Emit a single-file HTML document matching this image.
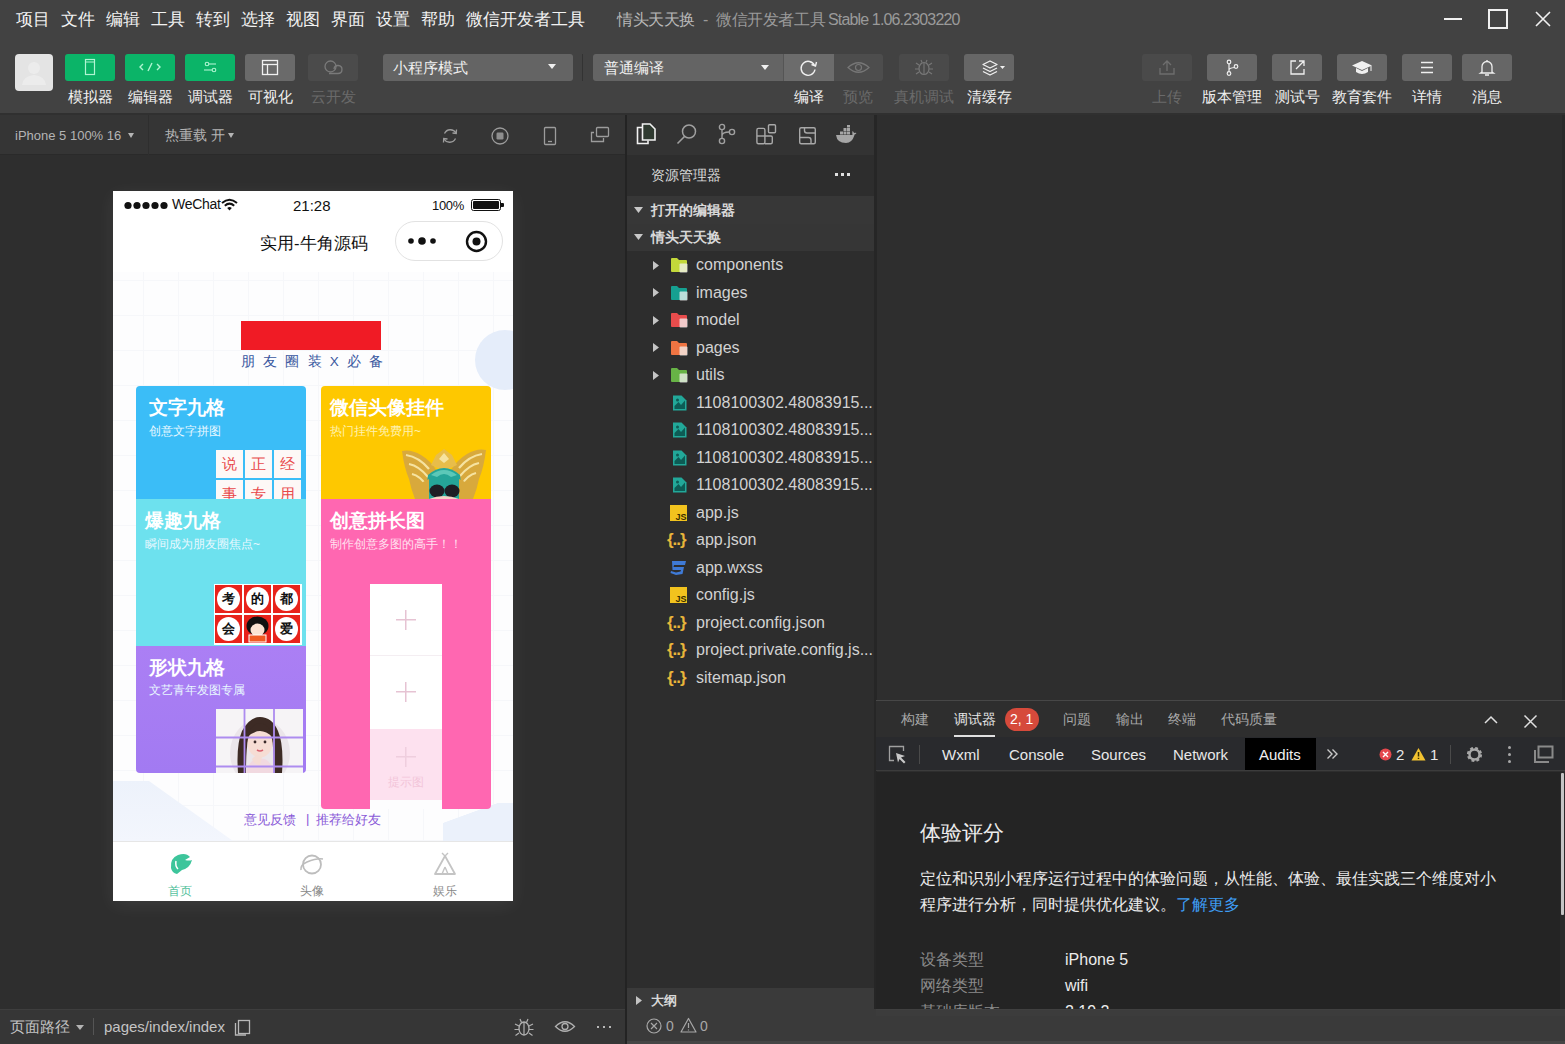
<!DOCTYPE html>
<html><head><meta charset="utf-8">
<style>
*{box-sizing:border-box;margin:0;padding:0}
html,body{width:1565px;height:1044px;overflow:hidden;background:#2e2e2e;font-family:"Liberation Sans",sans-serif;position:relative}
.a{position:absolute}
.t{position:absolute;white-space:nowrap;line-height:1}
/* top */
#top{left:0;top:0;width:1565px;height:114px;background:#424242}
.menu{top:11px;font-size:16.5px;color:#f2f2f2}
.tbtn{position:absolute;top:54px;width:50px;height:27px;border-radius:3px;background:#616161}
.tbtn.g{background:#0bb468}
.tbtn.d{background:#4a4a4a}
.tlab{position:absolute;top:89px;font-size:15px;color:#f0f0f0;white-space:nowrap;line-height:1;text-align:center;width:80px}
.fn{left:696px;font-size:16px;color:#d2d2d2}
.card-t{font-size:18.5px;color:#fff;font-weight:700}
.card-s{font-size:12px;color:#e8f8ff}
.cellw{width:27px;height:28px;background:#fdf8f6;color:#e8484a;font-size:15px;text-align:center;line-height:28px}
.cellr{width:29px;height:30px;background:#e8231b;border:1px solid #fff}
.cellr{font-size:13px;font-weight:900;color:#111;text-align:center;line-height:28px}
.cellr::before{content:"";position:absolute;left:2px;top:2px;width:23px;height:24px;border-radius:50%;background:#fff;z-index:0}
.plus{width:20px;height:20px;background:linear-gradient(#e6c3d3,#e6c3d3) center/20px 1.5px no-repeat,linear-gradient(#e6c3d3,#e6c3d3) center/1.5px 20px no-repeat}
.tlab.dim{color:#6a6a6a}
</style></head>
<body>
<div id="top" class="a">
  <div class="t menu" style="left:16px">项目</div>
  <div class="t menu" style="left:61px">文件</div>
  <div class="t menu" style="left:106px">编辑</div>
  <div class="t menu" style="left:151px">工具</div>
  <div class="t menu" style="left:196px">转到</div>
  <div class="t menu" style="left:241px">选择</div>
  <div class="t menu" style="left:286px">视图</div>
  <div class="t menu" style="left:331px">界面</div>
  <div class="t menu" style="left:376px">设置</div>
  <div class="t menu" style="left:421px">帮助</div>
  <div class="t menu" style="left:466px">微信开发者工具</div>
  <div class="t" style="left:617px;top:12px;font-size:16px;color:#9a9a9a;letter-spacing:-0.4px"><span style="color:#b8b8b8">情头天天换</span> <span style="margin:0 4px">-</span> 微信开发者工具</div><div class="t" style="left:828px;top:12px;font-size:16px;letter-spacing:-0.85px;color:#9a9a9a">Stable 1.06.2303220</div>

  <!-- avatar -->
  <div class="a" style="left:15px;top:54px;width:38px;height:37px;background:#e4e4e4;border-radius:4px">
    <svg class="a" style="left:0;top:0" width="38" height="37"><circle cx="19" cy="14" r="6" fill="#ececec"/><path d="M7 31 Q8 22 19 21 Q30 22 31 31 Z" fill="#ececec"/></svg>
  </div>
  <div class="tbtn g" style="left:65px"><svg class="a" style="left:0;top:0" width="50" height="27"><rect x="20.5" y="5.5" width="9" height="15" fill="none" stroke="#b0f5d2" stroke-width="1.2"/><line x1="21" y1="8" x2="29" y2="8" stroke="#b0f5d2" stroke-width="1"/></svg></div>
  <div class="tbtn g" style="left:125px"><svg class="a" style="left:0;top:0" width="50" height="27"><path d="M18 10 L15 13 L18 16 M32 10 L35 13 L32 16 M27 9 L23 17" fill="none" stroke="#b0f5d2" stroke-width="1.4"/></svg></div>
  <div class="tbtn g" style="left:185px"><svg class="a" style="left:0;top:0" width="50" height="27"><circle cx="22" cy="10" r="1.8" fill="none" stroke="#b0f5d2" stroke-width="1.1"/><circle cx="29" cy="16" r="1.8" fill="none" stroke="#b0f5d2" stroke-width="1.1"/><line x1="24" y1="10" x2="31" y2="10" stroke="#b0f5d2" stroke-width="1.1"/><line x1="19" y1="16" x2="27" y2="16" stroke="#b0f5d2" stroke-width="1.1"/></svg></div>
  <div class="tbtn" style="left:245px;background:#6a6a6a"><svg class="a" style="left:0;top:0" width="50" height="27"><rect x="17.5" y="6.5" width="15" height="14" fill="none" stroke="#f0f0f0" stroke-width="1.3"/><line x1="17.5" y1="10.5" x2="32.5" y2="10.5" stroke="#f0f0f0" stroke-width="1.3"/><line x1="22.5" y1="10.5" x2="22.5" y2="20.5" stroke="#f0f0f0" stroke-width="1.3"/></svg></div>
  <div class="tbtn" style="left:308px;background:#4b4b4b"><svg class="a" style="left:0;top:0" width="50" height="27"><circle cx="22.5" cy="12.5" r="5.5" fill="none" stroke="#7a7a7a" stroke-width="1.3"/><path d="M26 15 A4 4 0 1 1 30 19.5 L21 19.5" fill="none" stroke="#7a7a7a" stroke-width="1.3"/></svg></div>
  <div class="tlab" style="left:50px">模拟器</div>
  <div class="tlab" style="left:110px">编辑器</div>
  <div class="tlab" style="left:170px">调试器</div>
  <div class="tlab" style="left:230px">可视化</div>
  <div class="tlab dim" style="left:293px">云开发</div>
  <!-- mode dropdown -->
  <div class="a" style="left:383px;top:54px;width:190px;height:27px;background:#646464;border-radius:3px"></div>
  <div class="t" style="left:393px;top:60px;font-size:15px;color:#f0f0f0">小程序模式</div>
  <svg class="a" style="left:548px;top:64px" width="8" height="5"><path d="M0 0 L8 0 L4 5Z" fill="#f0f0f0"/></svg>
  <div class="a" style="left:582px;top:54px;width:1px;height:27px;background:#333"></div>
  <!-- compile dropdown -->
  <div class="a" style="left:593px;top:54px;width:241px;height:27px;background:#646464;border-radius:3px 0 0 3px"></div>
  <div class="a" style="left:783px;top:54px;width:51px;height:27px;background:#6c6c6c;border-left:1px solid #555"></div>
  <div class="t" style="left:604px;top:60px;font-size:15px;color:#f0f0f0">普通编译</div>
  <svg class="a" style="left:761px;top:65px" width="8" height="5"><path d="M0 0 L8 0 L4 5Z" fill="#f0f0f0"/></svg>
  <svg class="a" style="left:783px;top:54px" width="51" height="27"><path d="M31.5 11.5 A7 7 0 1 0 32 15.5" fill="none" stroke="#f0f0f0" stroke-width="1.4"/><path d="M28.5 10.5 L32.5 12 L33.5 8" fill="none" stroke="#f0f0f0" stroke-width="1.4"/></svg>
  <div class="a" style="left:834px;top:54px;width:49px;height:27px;background:#4d4d4d;border-radius:0 3px 3px 0"></div>
  <svg class="a" style="left:834px;top:54px" width="49" height="27"><path d="M14 13.5 Q24.5 4 35 13.5 Q24.5 23 14 13.5Z" fill="none" stroke="#777" stroke-width="1.2"/><circle cx="24.5" cy="13.5" r="3" fill="none" stroke="#777" stroke-width="1.2"/></svg>
  <div class="tbtn d" style="left:899px"><svg class="a" style="left:0;top:0" width="50" height="27"><ellipse cx="25" cy="14.5" rx="5" ry="6" fill="none" stroke="#777" stroke-width="1.2"/><path d="M20 11 L17 9 M30 11 L33 9 M20 15 L16 15 M30 15 L34 15 M20 18 L17 20 M30 18 L33 20 M23 8.5 L22 6 M27 8.5 L28 6 M25 9 L25 20" fill="none" stroke="#777" stroke-width="1.1"/></svg></div>
  <div class="tbtn" style="left:964px;background:#666"><svg class="a" style="left:0;top:0" width="50" height="27"><path d="M19 10.5 L26 7 L33 10.5 L26 14 Z M19 14 L26 17.5 L33 14 M19 17.5 L26 21 L33 17.5" fill="none" stroke="#f0f0f0" stroke-width="1.3" stroke-linejoin="round"/><path d="M36 12 L41 12 L38.5 15Z" fill="#f0f0f0"/></svg></div>
  <div class="tlab" style="left:769px">编译</div>
  <div class="tlab dim" style="left:818px">预览</div>
  <div class="tlab dim" style="left:884px">真机调试</div>
  <div class="tlab" style="left:949px">清缓存</div>
  <!-- right buttons -->
  <div class="tbtn d" style="left:1142px"><svg class="a" style="left:0;top:0" width="50" height="27"><path d="M18 14 L18 20 L32 20 L32 14 M25 17 L25 7 M21 11 L25 7 L29 11" fill="none" stroke="#6e6e6e" stroke-width="1.3"/></svg></div>
  <div class="tbtn" style="left:1207px;background:#666"><svg class="a" style="left:0;top:0" width="50" height="27"><circle cx="22" cy="8" r="1.8" fill="none" stroke="#f0f0f0" stroke-width="1.2"/><circle cx="22" cy="19.5" r="1.8" fill="none" stroke="#f0f0f0" stroke-width="1.2"/><circle cx="29" cy="12.5" r="1.8" fill="none" stroke="#f0f0f0" stroke-width="1.2"/><path d="M22 10 L22 17.5 M22 16 Q22 14 27.5 13.5" fill="none" stroke="#f0f0f0" stroke-width="1.2"/></svg></div>
  <div class="tbtn" style="left:1272px;background:#666"><svg class="a" style="left:0;top:0" width="50" height="27"><path d="M24 7 L19 7 L19 20 L32 20 L32 15 M27 7 L32 7 L32 12 M32 7 L24 15" fill="none" stroke="#f0f0f0" stroke-width="1.3"/></svg></div>
  <div class="tbtn" style="left:1337px;background:#666"><svg class="a" style="left:0;top:0" width="50" height="27"><path d="M15 11.5 L25 7 L35 11.5 L25 16 Z" fill="#f0f0f0"/><path d="M19 14 L19 18 Q25 22 31 18 L31 14 L25 17 Z" fill="#f0f0f0"/><line x1="34" y1="12" x2="34" y2="17" stroke="#f0f0f0" stroke-width="1"/></svg></div>
  <div class="tbtn" style="left:1402px;background:#666"><svg class="a" style="left:0;top:0" width="50" height="27"><path d="M19 8.5 L31 8.5 M19 13.5 L31 13.5 M19 18.5 L31 18.5" stroke="#f0f0f0" stroke-width="1.3"/></svg></div>
  <div class="tbtn" style="left:1462px;background:#666"><svg class="a" style="left:0;top:0" width="50" height="27"><path d="M20 18 L20 12.5 A5 5 0 0 1 30 12.5 L30 18 L31.5 19 L18.5 19 Z M23 21 L27 21" fill="none" stroke="#f0f0f0" stroke-width="1.3"/><line x1="25" y1="6" x2="25" y2="7.5" stroke="#f0f0f0" stroke-width="1.3"/></svg></div>
  <div class="tlab dim" style="left:1127px">上传</div>
  <div class="tlab" style="left:1192px">版本管理</div>
  <div class="tlab" style="left:1257px">测试号</div>
  <div class="tlab" style="left:1322px">教育套件</div>
  <div class="tlab" style="left:1387px">详情</div>
  <div class="tlab" style="left:1447px">消息</div>
  <!-- window controls -->
  <div class="a" style="left:1444px;top:18px;width:18px;height:2px;background:#f0f0f0"></div>
  <div class="a" style="left:1488px;top:9px;width:20px;height:20px;border:2px solid #f0f0f0"></div>
  <svg class="a" style="left:1535px;top:11px" width="16" height="16"><path d="M1 1 L15 15 M15 1 L1 15" stroke="#f0f0f0" stroke-width="1.6"/></svg>
</div>
<!-- sim toolbar -->
<div class="a" style="left:0;top:113px;width:1565px;height:2px;background:#303030"></div>
<div class="a" style="left:0;top:115px;width:625px;height:40px;background:#353535;border-bottom:1px solid #2a2a2a"></div>
<!-- sim status bar -->
<div class="a" style="left:0;top:1009px;width:625px;height:35px;background:#363636;border-top:1px solid #3e3e3e"></div>
<!-- divider -->
<div class="a" style="left:625px;top:115px;width:2px;height:929px;background:#232323"></div>
<!-- explorer -->
<div class="a" style="left:627px;top:115px;width:247px;height:929px;background:#2d2d2d"></div>
<div class="a" style="left:627px;top:115px;width:247px;height:40px;background:#333"></div>
<div class="a" style="left:627px;top:196px;width:247px;height:28px;background:#373737"></div>
<div class="a" style="left:627px;top:224px;width:247px;height:27px;background:#363636"></div>
<div class="a" style="left:627px;top:988px;width:247px;height:56px;background:#3a3a3a"></div>
<div class="a" style="left:874px;top:115px;width:3px;height:894px;background:#262626"></div>

<!-- sim toolbar content -->
<div class="t" style="left:15px;top:129px;font-size:13px;color:#b4b4b4">iPhone 5 100% 16</div>
<svg class="a" style="left:128px;top:133px" width="6" height="5"><path d="M0 0 L6 0 L3 5Z" fill="#b4b4b4"/></svg>
<div class="a" style="left:148px;top:115px;width:1px;height:40px;background:#2e2e2e"></div>
<div class="t" style="left:165px;top:128px;font-size:14px;color:#b4b4b4">热重载 开</div>
<svg class="a" style="left:228px;top:133px" width="6" height="5"><path d="M0 0 L6 0 L3 5Z" fill="#b4b4b4"/></svg>
<svg class="a" style="left:441px;top:127px" width="18" height="18"><path d="M3.5 6.5 A6.5 6.5 0 0 1 15 6" fill="none" stroke="#9c9c9c" stroke-width="1.3"/><path d="M14.5 11.5 A6.5 6.5 0 0 1 3 12" fill="none" stroke="#9c9c9c" stroke-width="1.3"/><path d="M15.5 2.5 L15.3 6.5 L11.5 6" fill="none" stroke="#9c9c9c" stroke-width="1.3"/><path d="M2.5 15.5 L2.7 11.5 L6.5 12" fill="none" stroke="#9c9c9c" stroke-width="1.3"/></svg>
<svg class="a" style="left:491px;top:127px" width="18" height="18"><circle cx="9" cy="9" r="8" fill="none" stroke="#9c9c9c" stroke-width="1.3"/><rect x="5.5" y="5.5" width="7" height="7" rx="1.2" fill="#8e8e8e"/></svg>
<svg class="a" style="left:543px;top:126px" width="14" height="20"><rect x="1.5" y="1.5" width="11" height="17" rx="1" fill="none" stroke="#9c9c9c" stroke-width="1.3"/><line x1="5" y1="15.5" x2="9" y2="15.5" stroke="#9c9c9c" stroke-width="1.3"/></svg>
<svg class="a" style="left:590px;top:126px" width="20" height="18"><rect x="6.5" y="1.5" width="12" height="9" rx="1" fill="none" stroke="#9c9c9c" stroke-width="1.3"/><path d="M4 6.5 L1.5 6.5 L1.5 15.5 L13.5 15.5 L13.5 12" fill="none" stroke="#9c9c9c" stroke-width="1.3"/></svg>
<!-- explorer icons -->
<svg class="a" style="left:636px;top:123px" width="22" height="22"><path d="M6 4.5 L1.5 4.5 L1.5 20.5 L12 20.5 L12 17.5" fill="none" stroke="#f2f2f2" stroke-width="1.6"/><path d="M6.5 1 L14 1 L19 6 L19 17 L6.5 17 Z" fill="#2f3a30" stroke="#f2f2f2" stroke-width="1.6"/></svg>
<svg class="a" style="left:676px;top:123px" width="22" height="22"><circle cx="13" cy="8.5" r="6.5" fill="none" stroke="#a0a0a0" stroke-width="1.5"/><line x1="8.5" y1="13.5" x2="1.5" y2="20.5" stroke="#a0a0a0" stroke-width="1.6"/></svg>
<svg class="a" style="left:717px;top:123px" width="20" height="22"><circle cx="5" cy="4" r="2.6" fill="none" stroke="#a0a0a0" stroke-width="1.4"/><circle cx="5" cy="18" r="2.6" fill="none" stroke="#a0a0a0" stroke-width="1.4"/><circle cx="15" cy="9" r="2.6" fill="none" stroke="#a0a0a0" stroke-width="1.4"/><path d="M5 6.6 L5 15.4 M5 13 Q5 9 12.5 9" fill="none" stroke="#a0a0a0" stroke-width="1.4"/></svg>
<svg class="a" style="left:755px;top:123px" width="22" height="22"><rect x="1.9" y="5.4" width="8" height="15.4" rx="1.5" fill="none" stroke="#a8a8a8" stroke-width="1.4"/><line x1="1.9" y1="13" x2="9.9" y2="13" stroke="#a8a8a8" stroke-width="1.4"/><path d="M9.9 13 L16 13 Q17.3 13 17.3 14.3 L17.3 19.3 Q17.3 20.8 15.8 20.8 L9.9 20.8" fill="none" stroke="#a8a8a8" stroke-width="1.4"/><rect x="13.5" y="1.7" width="7" height="8" rx="1" fill="none" stroke="#a8a8a8" stroke-width="1.4"/></svg>
<svg class="a" style="left:797px;top:125px" width="21" height="20"><rect x="2.7" y="2.7" width="15.6" height="16" rx="1.5" fill="none" stroke="#a8a8a8" stroke-width="1.4"/><path d="M7.5 2.7 L7.5 5.5 Q7.5 8 10 8 L18.3 8" fill="none" stroke="#a8a8a8" stroke-width="1.4"/><path d="M2.7 12.5 L11.5 12.5 Q14 12.5 14 15 L14 18.7" fill="none" stroke="#a8a8a8" stroke-width="1.4"/></svg>
<svg class="a" style="left:835px;top:125px" width="22" height="20"><path d="M1 10 L19 10 Q21 9 21.5 8 Q20 7.5 19 8 Q18.5 6.5 17.5 6 Q17 8 17.5 10 Z" fill="#a6a6a6"/><path d="M1 10 Q2 18 11 18 Q17 18 19.5 10 Z" fill="#a6a6a6"/><rect x="5" y="6.5" width="3" height="3" fill="#a6a6a6"/><rect x="8.5" y="6.5" width="3" height="3" fill="#a6a6a6"/><rect x="12" y="6.5" width="3" height="3" fill="#a6a6a6"/><rect x="8.5" y="3" width="3" height="3" fill="#a6a6a6"/><rect x="12" y="3" width="3" height="3" fill="#a6a6a6"/><rect x="12" y="0" width="3" height="2.5" fill="#a6a6a6"/></svg>
<!-- explorer header -->
<div class="t" style="left:651px;top:168px;font-size:14px;color:#dcdcdc">资源管理器</div>
<div class="a" style="left:835px;top:173px;width:3px;height:3px;background:#e0e0e0"></div>
<div class="a" style="left:841px;top:173px;width:3px;height:3px;background:#e0e0e0"></div>
<div class="a" style="left:847px;top:173px;width:3px;height:3px;background:#e0e0e0"></div>
<svg class="a" style="left:634px;top:207px" width="9" height="6"><path d="M0 0 L9 0 L4.5 6Z" fill="#c8c8c8"/></svg>
<div class="t" style="left:651px;top:203px;font-size:14px;color:#d8d8d8;font-weight:700">打开的编辑器</div>
<svg class="a" style="left:634px;top:234px" width="9" height="6"><path d="M0 0 L9 0 L4.5 6Z" fill="#c8c8c8"/></svg>
<div class="t" style="left:651px;top:230px;font-size:14px;color:#d8d8d8;font-weight:700">情头天天换</div>
<!-- tree -->
<svg class="a" style="left:653px;top:260.5px" width="6" height="9"><path d="M0 0 L6 4.5 L0 9Z" fill="#c4c4c4"/></svg>
<svg class="a" style="left:670px;top:257.0px" width="19" height="16"><path d="M1 2 Q1 1 2 1 L7 1 L9 3 L16 3 Q17 3 17 4 L17 14 Q17 15 16 15 L2 15 Q1 15 1 14 Z" fill="#c3d83a"/><rect x="9.5" y="6.5" width="8" height="9" rx="1" fill="#f3f3f3" opacity="0.75"/></svg>
<div class="t fn" style="top:257.0px">components</div>
<svg class="a" style="left:653px;top:288.0px" width="6" height="9"><path d="M0 0 L6 4.5 L0 9Z" fill="#c4c4c4"/></svg>
<svg class="a" style="left:670px;top:284.5px" width="19" height="16"><path d="M1 2 Q1 1 2 1 L7 1 L9 3 L16 3 Q17 3 17 4 L17 14 Q17 15 16 15 L2 15 Q1 15 1 14 Z" fill="#16a091"/><rect x="9.5" y="6.5" width="8" height="9" rx="1" fill="#f3f3f3" opacity="0.75"/></svg>
<div class="t fn" style="top:284.5px">images</div>
<svg class="a" style="left:653px;top:315.5px" width="6" height="9"><path d="M0 0 L6 4.5 L0 9Z" fill="#c4c4c4"/></svg>
<svg class="a" style="left:670px;top:312.0px" width="19" height="16"><path d="M1 2 Q1 1 2 1 L7 1 L9 3 L16 3 Q17 3 17 4 L17 14 Q17 15 16 15 L2 15 Q1 15 1 14 Z" fill="#e84c4c"/><rect x="9.5" y="6.5" width="8" height="9" rx="1" fill="#f3f3f3" opacity="0.75"/></svg>
<div class="t fn" style="top:312.0px">model</div>
<svg class="a" style="left:653px;top:343.0px" width="6" height="9"><path d="M0 0 L6 4.5 L0 9Z" fill="#c4c4c4"/></svg>
<svg class="a" style="left:670px;top:339.5px" width="19" height="16"><path d="M1 2 Q1 1 2 1 L7 1 L9 3 L16 3 Q17 3 17 4 L17 14 Q17 15 16 15 L2 15 Q1 15 1 14 Z" fill="#ef7442"/><rect x="9.5" y="6.5" width="8" height="9" rx="1" fill="#f3f3f3" opacity="0.75"/></svg>
<div class="t fn" style="top:339.5px">pages</div>
<svg class="a" style="left:653px;top:370.5px" width="6" height="9"><path d="M0 0 L6 4.5 L0 9Z" fill="#c4c4c4"/></svg>
<svg class="a" style="left:670px;top:367.0px" width="19" height="16"><path d="M1 2 Q1 1 2 1 L7 1 L9 3 L16 3 Q17 3 17 4 L17 14 Q17 15 16 15 L2 15 Q1 15 1 14 Z" fill="#67b346"/><rect x="9.5" y="6.5" width="8" height="9" rx="1" fill="#f3f3f3" opacity="0.75"/></svg>
<div class="t fn" style="top:367.0px">utils</div>
<svg class="a" style="left:672px;top:394.5px" width="15" height="16"><path d="M1 0.5 L9.5 0.5 L14.5 5.5 L14.5 15.5 L1 15.5 Z" fill="#22a899"/><path d="M2.5 14 L2.5 11 L6.5 7 L9 10 L13 5.5 L13 14Z" fill="#0d5c55"/><circle cx="5.5" cy="5" r="1.5" fill="#0d5c55"/></svg>
<div class="t fn" style="top:394.5px">1108100302.48083915...</div>
<svg class="a" style="left:672px;top:422.0px" width="15" height="16"><path d="M1 0.5 L9.5 0.5 L14.5 5.5 L14.5 15.5 L1 15.5 Z" fill="#22a899"/><path d="M2.5 14 L2.5 11 L6.5 7 L9 10 L13 5.5 L13 14Z" fill="#0d5c55"/><circle cx="5.5" cy="5" r="1.5" fill="#0d5c55"/></svg>
<div class="t fn" style="top:422.0px">1108100302.48083915...</div>
<svg class="a" style="left:672px;top:449.5px" width="15" height="16"><path d="M1 0.5 L9.5 0.5 L14.5 5.5 L14.5 15.5 L1 15.5 Z" fill="#22a899"/><path d="M2.5 14 L2.5 11 L6.5 7 L9 10 L13 5.5 L13 14Z" fill="#0d5c55"/><circle cx="5.5" cy="5" r="1.5" fill="#0d5c55"/></svg>
<div class="t fn" style="top:449.5px">1108100302.48083915...</div>
<svg class="a" style="left:672px;top:477.0px" width="15" height="16"><path d="M1 0.5 L9.5 0.5 L14.5 5.5 L14.5 15.5 L1 15.5 Z" fill="#22a899"/><path d="M2.5 14 L2.5 11 L6.5 7 L9 10 L13 5.5 L13 14Z" fill="#0d5c55"/><circle cx="5.5" cy="5" r="1.5" fill="#0d5c55"/></svg>
<div class="t fn" style="top:477.0px">1108100302.48083915...</div>
<svg class="a" style="left:670px;top:504.5px" width="17" height="16"><rect x="0" y="0" width="17" height="16" fill="#f2c31e"/><text x="16.5" y="14.8" font-size="9" font-family="Liberation Sans" font-weight="700" fill="#3a2e00" text-anchor="end">JS</text></svg>
<div class="t fn" style="top:504.5px">app.js</div>
<div class="t" style="left:667px;top:531.0px;font-size:17px;color:#e8b53a;letter-spacing:-1px;font-weight:700">{..}</div>
<div class="t fn" style="top:532.0px">app.json</div>
<svg class="a" style="left:670px;top:559.5px" width="17" height="16"><path d="M2 1 L16 1 L15 5 L4 5 L3.5 7 L14 7 L12.5 14 L6 15 L0.5 13 L1 11 L6 12.5 L10.5 11.5 L11 10 L2.5 10 Z" fill="#3f7ad6"/></svg>
<div class="t fn" style="top:559.5px">app.wxss</div>
<svg class="a" style="left:670px;top:587.0px" width="17" height="16"><rect x="0" y="0" width="17" height="16" fill="#f2c31e"/><text x="16.5" y="14.8" font-size="9" font-family="Liberation Sans" font-weight="700" fill="#3a2e00" text-anchor="end">JS</text></svg>
<div class="t fn" style="top:587.0px">config.js</div>
<div class="t" style="left:667px;top:613.5px;font-size:17px;color:#e8b53a;letter-spacing:-1px;font-weight:700">{..}</div>
<div class="t fn" style="top:614.5px">project.config.json</div>
<div class="t" style="left:667px;top:641.0px;font-size:17px;color:#e8b53a;letter-spacing:-1px;font-weight:700">{..}</div>
<div class="t fn" style="top:642.0px">project.private.config.js...</div>
<div class="t" style="left:667px;top:668.5px;font-size:17px;color:#e8b53a;letter-spacing:-1px;font-weight:700">{..}</div>
<div class="t fn" style="top:669.5px">sitemap.json</div>
<div class="a" style="left:1562px;top:115px;width:3px;height:585px;background:#292929"></div>
<!-- debugger -->
<div class="a" style="left:876px;top:700px;width:689px;height:1px;background:#474747"></div>
<div class="a" style="left:876px;top:701px;width:689px;height:36px;background:#2e2e2e"></div>
<div class="a" style="left:876px;top:737px;width:689px;height:34px;background:#292a2d;border-bottom:1px solid #3c3c3c"></div>
<div class="a" style="left:876px;top:772px;width:689px;height:237px;background:#242424"></div>
<div class="a" style="left:874px;top:1009px;width:691px;height:35px;background:#3a3a3a"></div><div class="a" style="left:876px;top:1009px;width:689px;height:7px;background:#3c3c3c;border-top:1px solid #404040"></div><div class="a" style="left:627px;top:1041px;width:938px;height:3px;background:#454545"></div>

<!-- explorer bottom -->
<svg class="a" style="left:636px;top:996px" width="6" height="9"><path d="M0 0 L6 4.5 L0 9Z" fill="#c4c4c4"/></svg>
<div class="t" style="left:651px;top:994px;font-size:13px;color:#d8d8d8;font-weight:700">大纲</div>
<svg class="a" style="left:646px;top:1018px" width="16" height="16"><circle cx="8" cy="8" r="7" fill="none" stroke="#a8a8a8" stroke-width="1.2"/><path d="M5 5 L11 11 M11 5 L5 11" stroke="#a8a8a8" stroke-width="1.2"/></svg>
<div class="t" style="left:666px;top:1019px;font-size:14px;color:#a8a8a8">0</div>
<svg class="a" style="left:680px;top:1017px" width="17" height="16"><path d="M8.5 1.5 L16 15 L1 15 Z" fill="none" stroke="#a8a8a8" stroke-width="1.2" stroke-linejoin="round"/><path d="M8.5 6 L8.5 11 M8.5 12.5 L8.5 13.5" stroke="#a8a8a8" stroke-width="1.2"/></svg>
<div class="t" style="left:700px;top:1019px;font-size:14px;color:#a8a8a8">0</div>
<!-- sim status bar content -->
<div class="t" style="left:10px;top:1019px;font-size:15px;color:#c4c4c4">页面路径</div>
<svg class="a" style="left:76px;top:1025px" width="8" height="5"><path d="M0 0 L8 0 L4 5Z" fill="#b4b4b4"/></svg>
<div class="a" style="left:93px;top:1018px;width:1px;height:17px;background:#555"></div>
<div class="t" style="left:104px;top:1019px;font-size:15px;color:#c4c4c4">pages/index/index</div>
<svg class="a" style="left:234px;top:1019px" width="17" height="17"><rect x="4.5" y="1.5" width="11" height="13" fill="none" stroke="#b8b8b8" stroke-width="1.3"/><path d="M1.5 4 L1.5 16 L12 16" fill="none" stroke="#b8b8b8" stroke-width="1.3"/></svg>
<svg class="a" style="left:513px;top:1017px" width="22" height="20"><ellipse cx="11" cy="11.5" rx="5" ry="6.5" fill="none" stroke="#b0b0b0" stroke-width="1.3"/><path d="M11 5 L11 18 M6 9 L2 7 M16 9 L20 7 M6 12.5 L1.5 12.5 M16 12.5 L20.5 12.5 M6 16 L2.5 18.5 M16 16 L19.5 18.5 M8.5 5.5 L7 2 M13.5 5.5 L15 2" fill="none" stroke="#b0b0b0" stroke-width="1.2"/></svg>
<svg class="a" style="left:554px;top:1019px" width="22" height="15"><path d="M1.5 7.5 Q11 -2 20.5 7.5 Q11 17 1.5 7.5Z" fill="none" stroke="#b0b0b0" stroke-width="1.3"/><circle cx="11" cy="7.5" r="3" fill="none" stroke="#b0b0b0" stroke-width="1.3"/></svg>
<div class="a" style="left:597px;top:1026px;width:2px;height:2px;background:#b8b8b8"></div>
<div class="a" style="left:603px;top:1026px;width:2px;height:2px;background:#b8b8b8"></div>
<div class="a" style="left:609px;top:1026px;width:2px;height:2px;background:#b8b8b8"></div>
<!-- debugger tabs -->
<div class="t" style="left:901px;top:712px;font-size:14px;color:#a8a8a8">构建</div>
<div class="t" style="left:954px;top:712px;font-size:14px;color:#e6e6e6">调试器</div>
<div class="a" style="left:954px;top:735px;width:41px;height:2px;background:#e0e0e0"></div>
<div class="a" style="left:1005px;top:708px;width:34px;height:23px;border-radius:12px;background:#d64a3b"></div>
<div class="t" style="left:1010px;top:712px;font-size:14px;color:#fff">2, 1</div>
<div class="t" style="left:1063px;top:712px;font-size:14px;color:#a8a8a8">问题</div>
<div class="t" style="left:1116px;top:712px;font-size:14px;color:#a8a8a8">输出</div>
<div class="t" style="left:1168px;top:712px;font-size:14px;color:#a8a8a8">终端</div>
<div class="t" style="left:1221px;top:712px;font-size:14px;color:#a8a8a8">代码质量</div>
<svg class="a" style="left:1484px;top:715px" width="14" height="9"><path d="M1 8 L7 2 L13 8" fill="none" stroke="#e0e0e0" stroke-width="1.5"/></svg>
<svg class="a" style="left:1523px;top:714px" width="15" height="15"><path d="M1.5 1.5 L13.5 13.5 M13.5 1.5 L1.5 13.5" stroke="#e0e0e0" stroke-width="1.5"/></svg>
<!-- devtools toolbar -->
<svg class="a" style="left:888px;top:745px" width="20" height="19"><path d="M6 15.5 L1.5 15.5 L1.5 1.5 L15.5 1.5 L15.5 6" fill="none" stroke="#a0a0a0" stroke-width="1.3"/><path d="M8 8 L17 11 L13 12.5 L17.5 17 L16 18.5 L11.5 14 L10 17.5 Z" fill="#c8c8c8"/></svg>
<div class="a" style="left:919px;top:745px;width:1px;height:19px;background:#4a4a4a"></div>
<div class="t" style="left:942px;top:747px;font-size:15px;color:#e8e8e8">Wxml</div>
<div class="t" style="left:1009px;top:747px;font-size:15px;color:#e8e8e8">Console</div>
<div class="t" style="left:1091px;top:747px;font-size:15px;color:#e8e8e8">Sources</div>
<div class="t" style="left:1173px;top:747px;font-size:15px;color:#e8e8e8">Network</div>
<div class="a" style="left:1245px;top:738px;width:71px;height:32px;background:#000"></div>
<div class="t" style="left:1259px;top:747px;font-size:15px;color:#f0f0f0">Audits</div>
<svg class="a" style="left:1326px;top:748px" width="13" height="12"><path d="M1.5 1.5 L6 6 L1.5 10.5 M6.5 1.5 L11 6 L6.5 10.5" fill="none" stroke="#c8c8c8" stroke-width="1.4"/></svg>
<svg class="a" style="left:1379px;top:748px" width="13" height="13"><circle cx="6.5" cy="6.5" r="6" fill="#e5484d"/><path d="M4 4 L9 9 M9 4 L4 9" stroke="#fff" stroke-width="1.4"/></svg>
<div class="t" style="left:1396px;top:747px;font-size:15px;color:#e8e8e8">2</div>
<svg class="a" style="left:1411px;top:747px" width="15" height="14"><path d="M7.5 1 L14.5 13.5 L0.5 13.5 Z" fill="#f2c230"/><path d="M7.5 5 L7.5 9.5 M7.5 10.8 L7.5 12" stroke="#3a3000" stroke-width="1.5"/></svg>
<div class="t" style="left:1430px;top:747px;font-size:15px;color:#e8e8e8">1</div>
<div class="a" style="left:1450px;top:745px;width:1px;height:19px;background:#4a4a4a"></div>
<svg class="a" style="left:1465px;top:745px" width="19" height="19"><circle cx="9.5" cy="9.5" r="6" fill="none" stroke="#a8a8a8" stroke-width="3.2" stroke-dasharray="2.6 2.1"/><circle cx="9.5" cy="9.5" r="5" fill="none" stroke="#a8a8a8" stroke-width="2.4"/><circle cx="9.5" cy="9.5" r="2" fill="#292a2d"/></svg>
<div class="a" style="left:1508px;top:746px;width:3px;height:3px;border-radius:2px;background:#a8a8a8"></div>
<div class="a" style="left:1508px;top:753px;width:3px;height:3px;border-radius:2px;background:#a8a8a8"></div>
<div class="a" style="left:1508px;top:760px;width:3px;height:3px;border-radius:2px;background:#a8a8a8"></div>
<svg class="a" style="left:1533px;top:745px" width="21" height="19"><rect x="5.5" y="1.5" width="14" height="11" fill="none" stroke="#8a8a8a" stroke-width="2"/><path d="M2 5 L2 17 L16 17" fill="none" stroke="#8a8a8a" stroke-width="2"/></svg>
<!-- audits content -->
<div class="t" style="left:920px;top:822px;font-size:21px;color:#ececec">体验评分</div>
<div class="a" style="left:920px;top:866px;width:640px;font-size:16px;line-height:26px;color:#ececec">定位和识别小程序运行过程中的体验问题，从性能、体验、最佳实践三个维度对小<br>程序进行分析，同时提供优化建议。<span style="color:#3e9ef5">了解更多</span></div>
<div class="t" style="left:920px;top:952px;font-size:16px;color:#8a8a8a">设备类型</div>
<div class="t" style="left:1065px;top:952px;font-size:16px;color:#ececec">iPhone 5</div>
<div class="t" style="left:920px;top:978px;font-size:16px;color:#8a8a8a">网络类型</div>
<div class="t" style="left:1065px;top:978px;font-size:16px;color:#ececec">wifi</div>
<div class="a" style="left:876px;top:1000px;width:689px;height:9px;overflow:hidden"><div class="t" style="left:44px;top:4px;font-size:16px;color:#8a8a8a">基础库版本</div><div class="t" style="left:189px;top:4px;font-size:16px;color:#ececec">2.19.2</div></div>
<div class="a" style="left:1560px;top:772px;width:5px;height:237px;background:#2a2a2a"></div>
<div class="a" style="left:1561px;top:773px;width:3px;height:142px;background:#c4c4c4;border-radius:1px"></div>
<!-- phone -->
<div class="a" style="left:113px;top:191px;width:400px;height:710px;box-shadow:0 4px 18px rgba(255,255,255,0.07)"></div><div class="a" id="phone" style="left:113px;top:191px;width:400px;height:710px;background:#fff;overflow:hidden">
  <!-- page bg -->
  <div class="a" style="left:0;top:81px;width:400px;height:569px;background-color:#fdfdfe;background-image:linear-gradient(#f6f7fa 1px,transparent 1px),linear-gradient(90deg,#f6f7fa 1px,transparent 1px);background-size:35px 35px;background-position:-5px 8px"></div>
  <div class="a" style="left:362px;top:139px;width:60px;height:60px;border-radius:50%;background:#e5edfa"></div>
  <div class="a" style="left:0;top:590px;width:120px;height:60px;background:linear-gradient(180deg,#edf2fb,#f3f6fd);clip-path:polygon(0 0,30% 0,100% 100%,0 100%)"></div>
  <div class="a" style="left:330px;top:612px;width:70px;height:40px;background:linear-gradient(160deg,transparent 30%,#ebf1fb 31%)"></div>
  <!-- status bar -->
  <svg class="a" style="left:11px;top:9px" width="46" height="11"><circle cx="4" cy="5.5" r="3.6" fill="#111"/><circle cx="13" cy="5.5" r="3.6" fill="#111"/><circle cx="22" cy="5.5" r="3.6" fill="#111"/><circle cx="31" cy="5.5" r="3.6" fill="#111"/><circle cx="40" cy="5.5" r="3.6" fill="#111"/></svg>
  <div class="t" style="left:59px;top:6px;font-size:14px;color:#111;letter-spacing:-0.3px">WeChat</div>
  <svg class="a" style="left:108px;top:7px" width="17" height="13"><path d="M1 5 Q8.5 -1.5 16 5" fill="none" stroke="#111" stroke-width="2"/><path d="M3.8 7.8 Q8.5 3.5 13.2 7.8" fill="none" stroke="#111" stroke-width="2"/><path d="M6.2 10 Q8.5 8 10.8 10 L8.5 12.5Z" fill="#111"/></svg>
  <div class="t" style="left:180px;top:7px;font-size:15px;color:#111">21:28</div>
  <div class="t" style="left:319px;top:8px;font-size:13px;color:#111;letter-spacing:-0.3px">100%</div>
  <div class="a" style="left:358px;top:8px;width:30px;height:12px;border:1.5px solid #111;border-radius:2.5px;padding:1px"><div style="width:100%;height:100%;background:#111;border-radius:1px"></div></div>
  <div class="a" style="left:388px;top:12px;width:3px;height:4px;background:#111;border-radius:0 1px 1px 0"></div>
  <!-- nav -->
  <div class="t" style="left:147px;top:45px;font-size:16.6px;color:#111">实用-牛角源码</div>
  <div class="a" style="left:282px;top:30px;width:108px;height:40px;border:1px solid #e2e2e2;border-radius:20px;background:#fff"></div>
  <svg class="a" style="left:295px;top:45px" width="30" height="10"><circle cx="3" cy="5" r="2.8" fill="#111"/><circle cx="14" cy="5" r="3.8" fill="#111"/><circle cx="25" cy="5" r="2.8" fill="#111"/></svg>
  <svg class="a" style="left:352px;top:39px" width="23" height="23"><circle cx="11.5" cy="11.5" r="9.5" fill="none" stroke="#111" stroke-width="2.4"/><circle cx="11.5" cy="11.5" r="4" fill="#111"/></svg>
  <!-- banner -->
  <div class="a" style="left:128px;top:130px;width:140px;height:29px;background:#f01b25"></div>
  <div class="t" style="left:128px;top:164px;font-size:13.5px;color:#3a58a0;letter-spacing:8.2px;font-weight:500">朋友圈装X必备</div>
  <!-- blue card -->
  <div class="a" style="left:23px;top:195px;width:170px;height:113px;background:#3bbdf7;border-radius:4px 4px 0 0"></div>
  <div class="t card-t" style="left:36px;top:208px">文字九格</div>
  <div class="t card-s" style="left:36px;top:234px">创意文字拼图</div>
  <div class="a" style="left:103px;top:259px;width:86px;height:49px;overflow:hidden">
    <div class="a cellw" style="left:0;top:0">说</div><div class="a cellw" style="left:29px;top:0">正</div><div class="a cellw" style="left:58px;top:0">经</div>
    <div class="a cellw" style="left:0;top:30px">事</div><div class="a cellw" style="left:29px;top:30px">专</div><div class="a cellw" style="left:58px;top:30px">用</div>
  </div>
  <!-- yellow card -->
  <div class="a" style="left:208px;top:195px;width:170px;height:113px;background:#fec800;border-radius:4px 4px 0 0"></div>
  <div class="t card-t" style="left:217px;top:208px">微信头像挂件</div>
  <div class="t card-s" style="left:217px;top:234px;color:#fff2b0">热门挂件免费用~</div>
  <svg class="a" style="left:288px;top:258px" width="86" height="50">
    <path d="M1 2 Q10 0 20 6 Q30 12 36 22 L34 34 Q28 42 22 50 L14 50 Q10 40 8 30 Q3 18 1 2Z" fill="#d8a93c"/>
    <path d="M85 1 Q76 -1 66 5 Q56 11 50 21 L52 33 Q58 42 64 50 L72 50 Q76 40 78 30 Q83 18 85 1Z" fill="#d8a93c"/>
    <path d="M5 6 Q18 8 28 20 M8 15 Q18 17 27 28 M11 25 Q19 27 25 36 M81 5 Q68 7 58 19 M78 14 Q68 16 59 27 M75 24 Q67 26 61 35" stroke="#f6e3a0" stroke-width="2.2" fill="none"/>
    <path d="M30 16 L35 6 L43 0 L51 6 L56 16 L43 22Z" fill="#e8bd4a"/>
    <path d="M38 10 L43 4 L48 10 L43 14Z" fill="#f6e3a0"/>
    <path d="M24 50 L27 26 Q43 12 59 26 L62 50Z" fill="#25a598"/>
    <path d="M30 26 Q43 16 56 26 L50 28 Q43 22 36 28Z" fill="#5cc8b8"/>
    <path d="M20 34 L28 30 L28 50 L20 50Z" fill="#d8a93c"/><path d="M66 34 L58 30 L58 50 L66 50Z" fill="#d8a93c"/>
    <ellipse cx="36" cy="42" rx="7.5" ry="6.5" fill="#1e1e24"/><ellipse cx="51" cy="42" rx="7.5" ry="6.5" fill="#1e1e24"/>
    <path d="M28 50 Q43 44 58 50Z" fill="#f4d2c4"/>
  </svg>
  <!-- cyan card -->
  <div class="a" style="left:23px;top:308px;width:170px;height:147px;background:#6de1ee"></div>
  <div class="t card-t" style="left:32px;top:321px">爆趣九格</div>
  <div class="t card-s" style="left:32px;top:347px">瞬间成为朋友圈焦点~</div>
  <div class="a" style="left:101px;top:393px;width:88px;height:61px;background:#fff">
    <div class="a cellr" style="left:0;top:0"><span style="position:relative;z-index:1">考</span></div><div class="a cellr" style="left:29px;top:0"><span style="position:relative;z-index:1">的</span></div><div class="a cellr" style="left:58px;top:0"><span style="position:relative;z-index:1">都</span></div>
    <div class="a cellr" style="left:0;top:30px"><span style="position:relative;z-index:1">会</span></div><div class="a" style="left:29px;top:30px;width:29px;height:30px;background:#e8231b;border:1px solid #fff"><svg width="27" height="28" style="position:absolute;left:0;top:0"><ellipse cx="13.5" cy="11" rx="11" ry="9.5" fill="#111"/><ellipse cx="13.5" cy="15" rx="7" ry="6.5" fill="#fbe3d3"/><rect x="5" y="20" width="17" height="7" fill="#f05a22" stroke="#fff" stroke-width="1"/></svg></div><div class="a cellr" style="left:58px;top:30px"><span style="position:relative;z-index:1">爱</span></div>
  </div>
  <!-- pink card -->
  <div class="a" style="left:208px;top:308px;width:170px;height:310px;background:#ff67b1;border-radius:0 0 4px 4px"></div>
  <div class="t card-t" style="left:217px;top:321px">创意拼长图</div>
  <div class="t card-s" style="left:217px;top:347px;color:#ffe0ef">制作创意多图的高手！！</div>
  <div class="a" style="left:257px;top:393px;width:72px;height:225px;background:#fdfdfe"></div>
  <div class="a" style="left:257px;top:393px;width:72px;height:72px;background:#fff;border-bottom:1px solid #f4eef2"></div>
  <div class="a" style="left:257px;top:465px;width:72px;height:73px;background:#fff"></div>
  <div class="a" style="left:257px;top:538px;width:72px;height:71px;background:#fde1ef"></div>
  <div class="a plus" style="left:283px;top:419px"></div>
  <div class="a plus" style="left:283px;top:491px"></div>
  <div class="a plus" style="left:283px;top:556px;opacity:.6"></div>
  <div class="t" style="left:275px;top:585px;font-size:12px;color:#f3c6da">提示图</div>
  <!-- purple card -->
  <div class="a" style="left:23px;top:455px;width:170px;height:127px;background:linear-gradient(180deg,#ab7ff4,#a27af2);border-radius:0 0 4px 4px"></div>
  <div class="t card-t" style="left:36px;top:468px">形状九格</div>
  <div class="t card-s" style="left:36px;top:493px">文艺青年发图专属</div>
  <div class="a" style="left:103px;top:518px;width:87px;height:64px;background:#f6f4f6;overflow:hidden">
    <svg class="a" style="left:0;top:0" width="87" height="64"><ellipse cx="44" cy="44" rx="30" ry="34" fill="#ebe6ea"/><path d="M22 64 Q20 36 26 22 Q34 8 44 8 Q56 8 62 22 Q68 36 66 64 L58 64 Q58 40 56 32 L32 32 Q30 40 30 64Z" fill="#3d2b25"/><ellipse cx="44" cy="34" rx="12.5" ry="14.5" fill="#f6ddd4"/><path d="M31 28 Q36 14 44 14 Q52 14 57 28 Q50 22 44 22 Q38 22 31 28Z" fill="#3d2b25"/><circle cx="39" cy="33" r="1.4" fill="#3a2a2a"/><circle cx="49" cy="33" r="1.4" fill="#3a2a2a"/><path d="M41 41 Q44 43 47 41" stroke="#d9606e" stroke-width="1.6" fill="none"/><path d="M30 64 Q34 48 44 50 Q54 48 58 64Z" fill="#f1d9e0"/><path d="M36 50 Q40 44 46 48 L44 56 Q38 56 36 50Z" fill="#f5dcd4"/><path d="M0 28.5 L87 28.5 M0 57.5 L87 57.5 M28.5 0 L28.5 64 M58 0 L58 64" stroke="#ad8cef" stroke-width="1.8"/></svg>
  </div>
  <!-- footer -->
  <div class="t" style="left:131px;top:622px;font-size:13px;color:#8a5ad8;font-weight:500">意见反馈</div><div class="t" style="left:193px;top:621px;font-size:13px;color:#8a5ad8">|</div><div class="t" style="left:203px;top:622px;font-size:13px;color:#8a5ad8;font-weight:500">推荐给好友</div>
  <!-- tab bar -->
  <div class="a" style="left:0;top:650px;width:400px;height:60px;background:#fff;border-top:1px solid #e6e6e6"></div>
  <svg class="a" style="left:55px;top:661px" width="25" height="25"><path d="M3 16 Q2 6 10 3 Q18 0 22 5 L17 8 Q21 9 24 8 Q22 16 14 18 L9 22 Q4 21 3 16Z" fill="#3dc59b"/><path d="M8 9 Q7 14 10 17" stroke="#fff" stroke-width="1.5" fill="none"/></svg>
  <svg class="a" style="left:186px;top:661px" width="26" height="25"><circle cx="13" cy="12.5" r="9" fill="none" stroke="#bdbdbd" stroke-width="1.8"/><path d="M2 18 Q1 13 8 10 Q18 6 24 7" fill="none" stroke="#bdbdbd" stroke-width="1.6"/></svg>
  <svg class="a" style="left:319px;top:660px" width="26" height="26"><path d="M13 5 L23 23 L3 23 Z" fill="none" stroke="#c4c4c4" stroke-width="1.8" stroke-linejoin="round"/><path d="M10 2 L13 5 L16 2 M13 16 L10 23 M13 16 L16 23" fill="none" stroke="#c4c4c4" stroke-width="1.4"/></svg>
  <div class="t" style="left:55px;top:694px;font-size:12px;color:#52c19c">首页</div>
  <div class="t" style="left:187px;top:694px;font-size:12px;color:#888">头像</div>
  <div class="t" style="left:320px;top:694px;font-size:12px;color:#888">娱乐</div>
</div>
</body></html>
